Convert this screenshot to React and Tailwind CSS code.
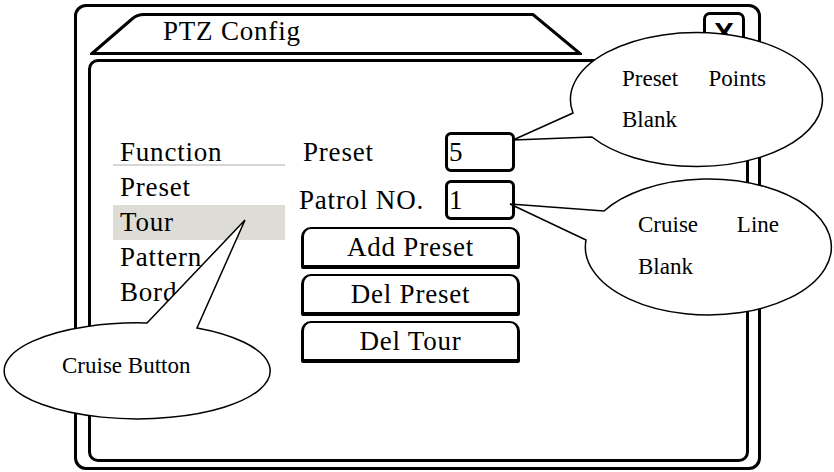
const menu = [
  { label: 'Preset' },
  { label: 'Tour', active: true },
  { label: 'Pattern' },
  { label: 'Border' },
];

const buttons = ['Add Preset', 'Del Preset', 'Del Tour'];

function Field({ label, value, labelClass }) {
  return (
    <div className="flex items-center">
      <span className={labelClass}>{label}</span>
      <div className="w-[70px] h-[40px] border-[3px] border-black rounded-[6px] pl-[1px] leading-[34px]">
        {value}
      </div>
    </div>
  );
}

export default function App() {
  return (
    <div className="relative w-[834px] h-[472px] overflow-hidden bg-white text-black font-['Liberation_Serif',serif]">
      {/* dialog */}
      <div className="ml-[74px] mt-[4px] w-[687px] h-[466px] border-[3px] border-black rounded-[12px] flex flex-col text-[27px] tracking-[0.8px]">
        {/* header */}
        <div className="h-[52px] flex items-start shrink-0">
          <div className="relative ml-[13px] mt-[5px] w-[492px] h-[44px]">
            <svg className="absolute inset-0" width="492" height="44" viewBox="0 0 492 44">
              <path
                d="M2 41.5 L42 7 Q47 2.5 54 2.5 L443 2.5 L490 41.5 Z"
                fill="none"
                stroke="#000"
                strokeWidth="3"
              />
            </svg>
            <div className="relative pl-[73px] pt-[1.5px] leading-[35px]">PTZ Config</div>
          </div>
          <div className="ml-[121px] mt-[5px] w-[42px] h-[40px] border-[3px] border-black rounded-t-[7px] text-center text-[30px] font-bold leading-[36px] tracking-normal font-['Liberation_Sans',sans-serif]">
            X
          </div>
        </div>

        {/* panel */}
        <div className="flex-1 ml-[11px] mr-[9px] mb-[5px] border-[3px] border-black rounded-[10px] flex">
          <div className="pl-[22px] pt-[73px] w-[194px]">
            <div className="h-[31px] px-[7px] leading-[35px] border-b-2 border-[#d6d6d6]">Function</div>
            <div className="mt-[4px]">
              {menu.map((item) => (
                <div
                  key={item.label}
                  className={item.active ? 'h-[35px] px-[7px] leading-[35px] bg-[#dddcd6]' : 'h-[35px] px-[7px] leading-[35px]'}
                >
                  {item.label}
                </div>
              ))}
            </div>
          </div>

          <div className="ml-[14px] pt-[70px] flex flex-col">
            <Field label="Preset" value="5" labelClass="w-[146px] pl-[4px] leading-[35px]" />
            <div className="mt-[8px]">
              <Field label="Patrol NO." value="1" labelClass="w-[146px] leading-[35px]" />
            </div>
            <div className="mt-[7px] ml-[2px] flex flex-col gap-[5px]">
              {buttons.map((b) => (
                <div
                  key={b}
                  className="w-[219px] h-[42px] border-black border-t-2 border-x-[3px] border-b-4 rounded-t-[10px] rounded-b-[2px] text-center leading-[36px]"
                >
                  {b}
                </div>
              ))}
            </div>
          </div>
        </div>
      </div>

      {/* callouts */}
      <svg className="absolute inset-0 pointer-events-none" width="834" height="472" viewBox="0 0 834 472">
        <path
          d="M573 113 A126 67 0 1 1 592 137 L513 140 Z"
          fill="#fff"
          stroke="#000"
          strokeWidth="1.5"
        />
        <path
          d="M604 211 A123 68 0 1 1 586 240 L510 204 Z"
          fill="#fff"
          stroke="#000"
          strokeWidth="1.5"
        />
        <path
          d="M197 328 A133 48 0 1 1 147 323 L245 220 Z"
          fill="#fff"
          stroke="#000"
          strokeWidth="1.5"
        />
      </svg>

      <div className="absolute left-[622px] top-[57.7px] w-[144px] text-[23px] leading-[41px]">
        <div className="flex justify-between">
          <span>Preset</span>
          <span>Points</span>
        </div>
        <div>Blank</div>
      </div>

      <div className="absolute left-[638px] top-[204.2px] w-[141px] text-[23px] leading-[42px]">
        <div className="flex justify-between">
          <span>Cruise</span>
          <span>Line</span>
        </div>
        <div>Blank</div>
      </div>

      <div className="absolute left-[62px] top-[353.7px] text-[23px] leading-[23px]">
        Cruise Button
      </div>
    </div>
  );
}
